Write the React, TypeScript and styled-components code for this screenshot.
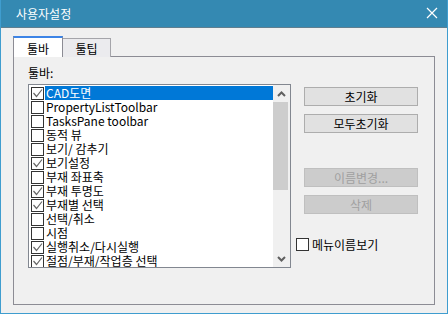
import React, {useState} from 'react'
import styled, {createGlobalStyle} from 'styled-components';

const GlobalStyle = createGlobalStyle`
  html, body {
    margin: 0;
    padding: 0;
    background: #f0f0f0;
  }
  * {
    box-sizing: border-box;
  }
`;

const Window = styled("div")`
  width: 448px;
  height: 314px;
  display: flex;
  flex-direction: column;
  background: #f0f0f0;
  border: 1px solid #3f9dcf;
  border-top: none;
  font-family: "Noto Sans CJK KR", "Liberation Sans", sans-serif;
  font-size: 12px;
  color: #000;
  overflow: hidden;
`;

const TitleBar = styled("div")`
  height: 28px;
  margin: 0 -1px;
  display: flex;
  align-items: center;
  justify-content: space-between;
  padding: 0 6px 1px 16px;
  background: #3489b2;
  border-bottom: 1px solid #5f7f90;
  color: #fff;
  font-size: 12px;
`;

const CloseButton = styled("div")`
  width: 20px;
  height: 20px;
  display: flex;
  align-items: center;
  justify-content: center;
`;

const Body = styled("div")`
  flex: 1;
  display: flex;
  flex-direction: column;
  padding: 8px 12px 8px 12px;
`;

const TabStrip = styled("div")`
  display: flex;
  align-items: flex-end;
  height: 21px;
  position: relative;
  z-index: 1;
`;

const Tab = styled("div")<{$active?: boolean}>`
  display: flex;
  align-items: center;
  justify-content: center;
  font-size: 12px;
  ${p => p.$active ? `
    width: 50px;
    height: 21px;
    background: #fff;
    border: 1px solid #8c8c94;
    border-top: 2px solid #3d84e6;
    border-bottom: none;
    padding-top: 1px;
  ` : `
    width: 48px;
    height: 19px;
    background: #ebebee;
    border: 1px solid #a5a5aa;
    border-left: none;
    border-bottom: none;
  `}
`;

const Panel = styled("div")`
  flex: 1;
  margin-top: -1px;
  border: 1px solid #8c8c94;
  display: flex;
  padding: 8px 0 0 14px;
`;

const LeftColumn = styled("div")`
  display: flex;
  flex-direction: column;
`;

const Label = styled("div")`
  height: 19px;
  line-height: 15px;
`;

const ListBox = styled("div")`
  width: 263px;
  height: 184px;
  border: 1px solid #828790;
  background: #fff;
  display: flex;
  overflow: hidden;
`;

const Items = styled("div")`
  flex: 1;
  padding-top: 1px;
  overflow: hidden;
`;

const Row = styled("div")`
  height: 14px;
  display: flex;
  align-items: center;
  padding-left: 2px;
`;

const Box = styled("div")`
  width: 13px;
  height: 13px;
  flex: none;
  border: 1px solid #333;
  background: #fff;
  display: flex;
  align-items: center;
  justify-content: center;
`;

const ItemText = styled("div")<{$selected?: boolean}>`
  flex: 1;
  height: 14px;
  line-height: 14px;
  margin-left: 1px;
  padding-left: 1px;
  white-space: nowrap;
  background: ${p => p.$selected ? '#0078d7' : 'transparent'};
  color: ${p => p.$selected ? '#fff' : '#000'};
`;

const ScrollBar = styled("div")`
  width: 17px;
  flex: none;
  background: #f0f0f0;
  display: flex;
  flex-direction: column;
`;

const ScrollArrow = styled("div")`
  height: 17px;
  display: flex;
  align-items: center;
  justify-content: center;
`;

const ScrollTrack = styled("div")`
  flex: 1;
  padding: 0 2px 0 0;
`;

const Thumb = styled("div")`
  height: 88px;
  background: #cdcdcd;
`;

const RightColumn = styled("div")`
  display: flex;
  flex-direction: column;
  margin-left: 5px;
  padding-top: 22px;
`;

const Button = styled("div")<{$disabled?: boolean}>`
  width: 114px;
  height: 19px;
  margin-left: 8px;
  margin-bottom: 8px;
  display: flex;
  align-items: center;
  justify-content: center;
  font-size: 12px;
  background: ${p => p.$disabled ? '#cccccc' : '#e1e1e1'};
  border: 1px solid ${p => p.$disabled ? '#bfbfbf' : '#adadad'};
  color: ${p => p.$disabled ? '#a0a0a0' : '#000'};
`;

const Spacer = styled("div")<{$h: number}>`
  height: ${p => p.$h}px;
`;

const CheckRow = styled("div")`
  display: flex;
  align-items: center;
  gap: 3px;
`;

type Item = {name: string, checked: boolean}

const items: Item[] = [
    {name: "CAD도면", checked: true},
    {name: "PropertyListToolbar", checked: false},
    {name: "TasksPane toolbar", checked: false},
    {name: "동적 뷰", checked: false},
    {name: "보기/ 감추기", checked: false},
    {name: "보기설정", checked: true},
    {name: "부재 좌표축", checked: false},
    {name: "부재 투명도", checked: true},
    {name: "부재별 선택", checked: true},
    {name: "선택/취소", checked: false},
    {name: "시점", checked: false},
    {name: "실행취소/다시실행", checked: true},
    {name: "절점/부재/작업층 선택", checked: true},
];

const CheckMark = () => (
    <svg width="11" height="11" viewBox="0 0 11 11">
        <polyline points="1.5,5 4.5,8.5 10,1.5" fill="none" stroke="#666" strokeWidth="1.2"/>
    </svg>
);

const Chevron = ({up}: {up?: boolean}) => (
    <svg width="9" height="6" viewBox="0 0 9 6">
        <polyline points={up ? "1,5 4.5,1.5 8,5" : "1,1 4.5,4.5 8,1"} fill="none" stroke="#606060" strokeWidth="2"/>
    </svg>
);

function App() {
    const [tab, setTab] = useState(0);
    const [selected, setSelected] = useState(0);
    const [showNames, setShowNames] = useState(false);

    return (
        <>
            <GlobalStyle/>
            <Window>
                <TitleBar>
                    <span>사용자설정</span>
                    <CloseButton>
                        <svg width="12" height="12" viewBox="0 0 12 12">
                            <path d="M1 1L11 11M11 1L1 11" stroke="#fff" strokeWidth="1.2"/>
                        </svg>
                    </CloseButton>
                </TitleBar>
                <Body>
                    <TabStrip>
                        <Tab $active={tab === 0} onClick={() => setTab(0)}>툴바</Tab>
                        <Tab $active={tab === 1} onClick={() => setTab(1)}>툴팁</Tab>
                    </TabStrip>
                    <Panel>
                        <LeftColumn>
                            <Label>툴바:</Label>
                            <ListBox>
                                <Items>
                                    {items.map((item, i) => (
                                        <Row key={item.name} onClick={() => setSelected(i)}>
                                            <Box>{item.checked && <CheckMark/>}</Box>
                                            <ItemText $selected={selected === i}>{item.name}</ItemText>
                                        </Row>
                                    ))}
                                </Items>
                                <ScrollBar>
                                    <ScrollArrow><Chevron up/></ScrollArrow>
                                    <ScrollTrack><Thumb/></ScrollTrack>
                                    <ScrollArrow><Chevron/></ScrollArrow>
                                </ScrollBar>
                            </ListBox>
                        </LeftColumn>
                        <RightColumn>
                            <Button>초기화</Button>
                            <Button>모두초기화</Button>
                            <Spacer $h={27}/>
                            <Button $disabled>이름변경...</Button>
                            <Button $disabled>삭제</Button>
                            <Spacer $h={14}/>
                            <CheckRow onClick={() => setShowNames(!showNames)}>
                                <Box>{showNames && <CheckMark/>}</Box>
                                <span>메뉴이름보기</span>
                            </CheckRow>
                        </RightColumn>
                    </Panel>
                </Body>
            </Window>
        </>
    )
}

export default App
